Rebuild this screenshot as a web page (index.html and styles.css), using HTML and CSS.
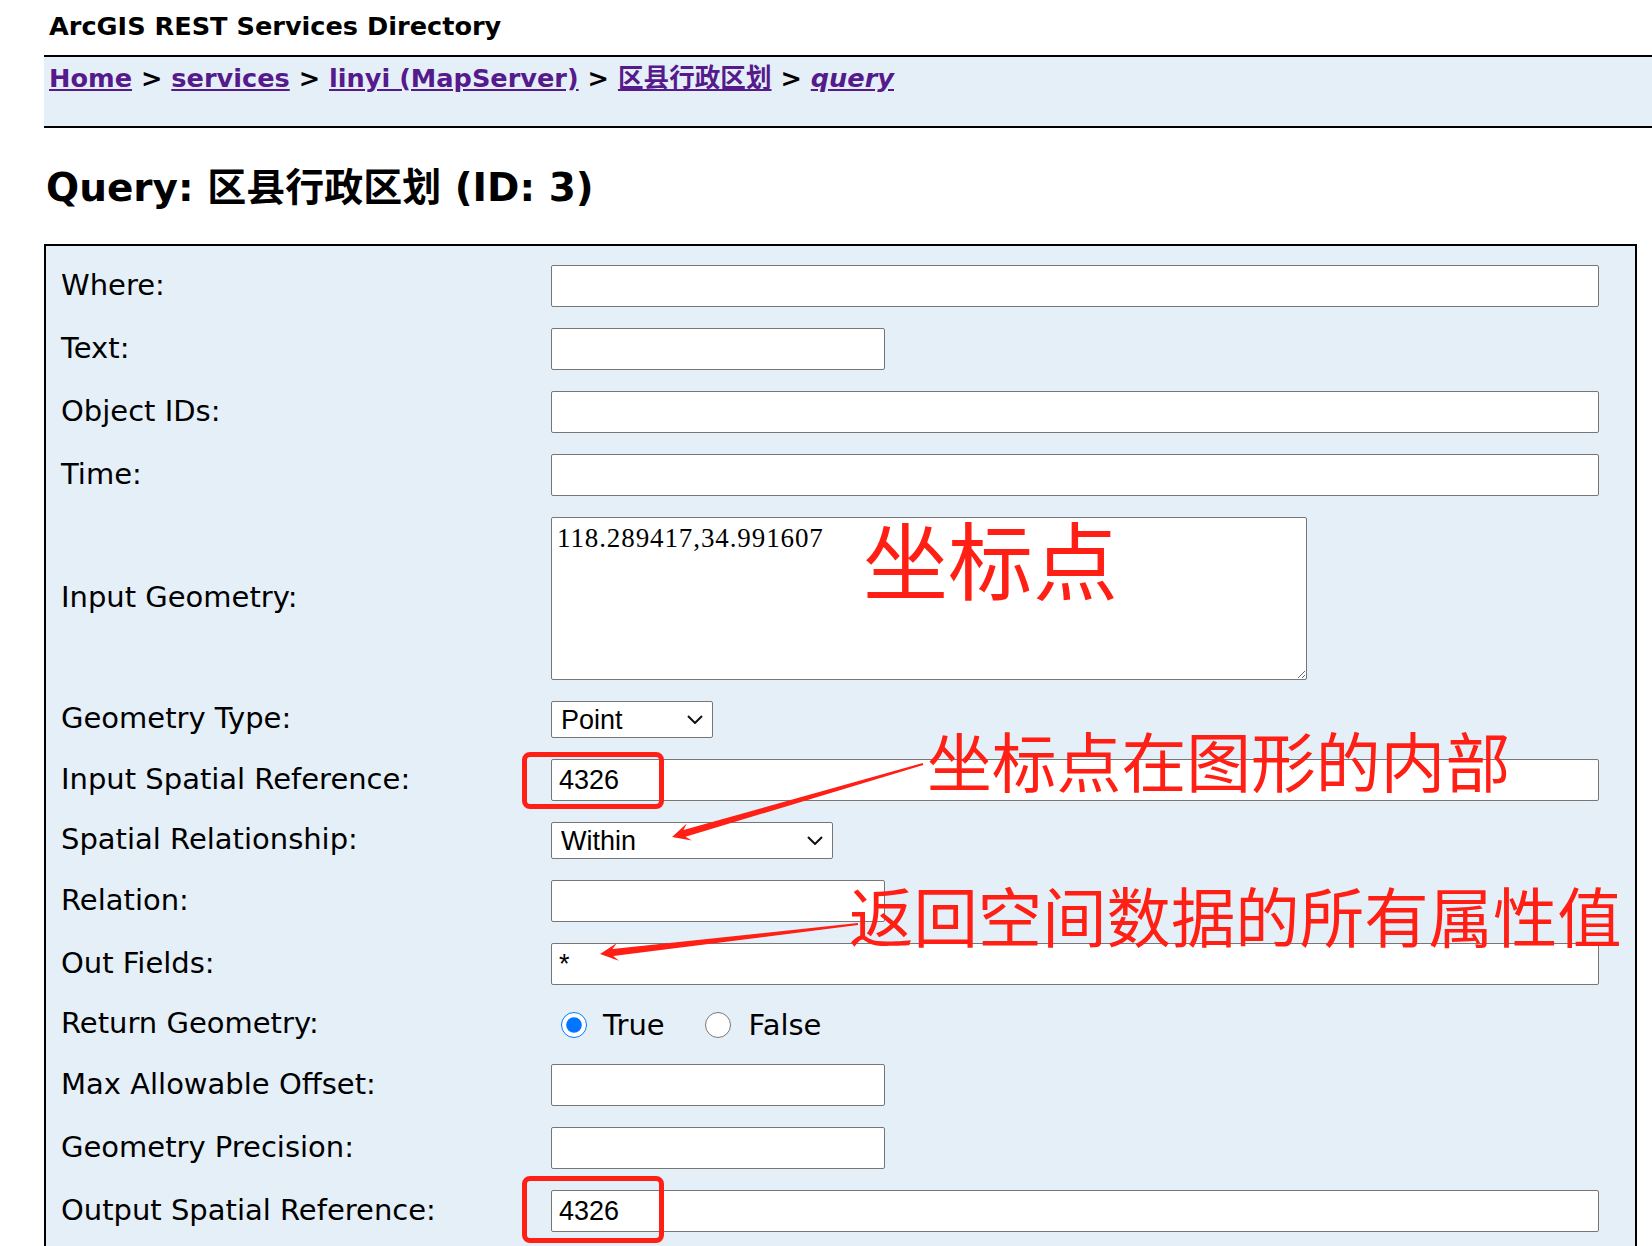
FILE: index.html
```html
<!DOCTYPE html>
<html lang="zh">
<head>
<meta charset="utf-8">
<title>ArcGIS REST Services Directory</title>
<link rel="stylesheet" href="styles.css">
</head>
<body>
<div class="page">
  <header class="top">
    <div class="title">ArcGIS REST Services Directory</div>
    <nav class="crumbs"><a href="#">Home</a> &gt; <a href="#">services</a> &gt; <a href="#">linyi (MapServer)</a> &gt; <a href="#">区县行政区划</a> &gt; <a href="#" class="cur">query</a></nav>
  </header>

  <h2 class="heading">Query: 区县行政区划 (ID: 3)</h2>

  <form class="box">
    <label class="lbl">Where:</label>
    <div class="fld"><input class="in full" type="text"></div>

    <label class="lbl">Text:</label>
    <div class="fld"><input class="in short" type="text"></div>

    <label class="lbl">Object IDs:</label>
    <div class="fld"><input class="in full" type="text"></div>

    <label class="lbl">Time:</label>
    <div class="fld"><input class="in full" type="text"></div>

    <label class="lbl">Input Geometry:</label>
    <div class="fld"><textarea class="geom">118.289417,34.991607</textarea></div>

    <label class="lbl">Geometry Type:</label>
    <div class="fld"><div class="sel sel-a"><select class="in dd"><option>Point</option></select><svg class="chev" width="16" height="9" viewBox="0 0 16 9"><polyline points="1,1 8,8 15,1" fill="none" stroke="#111" stroke-width="2"/></svg></div></div>

    <label class="lbl">Input Spatial Reference:</label>
    <div class="fld"><input class="in full" type="text" value="4326"></div>

    <label class="lbl">Spatial Relationship:</label>
    <div class="fld"><div class="sel sel-b"><select class="in dd"><option>Within</option></select><svg class="chev" width="16" height="9" viewBox="0 0 16 9"><polyline points="1,1 8,8 15,1" fill="none" stroke="#111" stroke-width="2"/></svg></div></div>

    <label class="lbl">Relation:</label>
    <div class="fld"><input class="in short" type="text"></div>

    <label class="lbl">Out Fields:</label>
    <div class="fld"><input class="in full star" type="text" value="*"></div>

    <label class="lbl">Return Geometry:</label>
    <div class="fld radios">
      <input type="radio" name="rg" id="rgt" checked><label for="rgt" class="rl">True</label>
      <input type="radio" name="rg" id="rgf" class="r2"><label for="rgf" class="rl rl2">False</label>
    </div>

    <label class="lbl">Max Allowable Offset:</label>
    <div class="fld"><input class="in short" type="text"></div>

    <label class="lbl">Geometry Precision:</label>
    <div class="fld"><input class="in short" type="text"></div>

    <label class="lbl">Output Spatial Reference:</label>
    <div class="fld"><input class="in full" type="text" value="4326"></div>
  </form>

  <div class="note n1">坐标点</div>
  <div class="note n2">坐标点在图形的内部</div>
  <div class="note n3">返回空间数据的所有属性值</div>
  <div class="mark m1"></div>
  <div class="mark m2"></div>
  <svg class="arrows" width="1652" height="1246" viewBox="0 0 1652 1246">
    <polygon points="923.3,765.0 685.5,836.8 691.8,840.6 672,837 686.8,823.4 683.5,830.0 922.7,763.0" fill="#ff1f14"/>
    <polygon points="858.1,925.0 613.3,956.0 618.9,960.8 600,954 616.9,943.0 612.5,949.0 857.9,923.0" fill="#ff1f14"/>
  </svg>
</div>
</body>
</html>
```

FILE: styles.css
```css
html, body {
  margin: 0;
  padding: 0;
  background: #fff;
  overflow: hidden;
}

body {
  font-family: "DejaVu Sans", "Noto Sans CJK SC", sans-serif;
  color: #000;
}

.page {
  position: relative;
  padding-left: 44px;
}

.title {
  font-weight: bold;
  font-size: 25.6px;
  line-height: 30px;
  padding: 11px 0 14px 5px;
  border-bottom: 2px solid #000;
}

.crumbs {
  background: #e5eff7;
  font-weight: bold;
  font-size: 25.6px;
  line-height: 30px;
  padding: 6px 0 33px 5px;
  border-bottom: 2px solid #000;
}

.crumbs a {
  color: #551a8b;
  text-decoration: underline;
}

.crumbs a.cur {
  font-style: italic;
}

.heading {
  margin: 37px 0 33px 2px;
  font-size: 39px;
  line-height: 46px;
  font-weight: bold;
}

.box {
  margin: 0 15px 0 0;
  background: #e5eff7;
  border: 2px solid #000;
  padding: 19px 36px 40px 15px;
  display: grid;
  grid-template-columns: 490px 1fr;
  row-gap: 21px;
  align-items: center;
}

.lbl {
  font-size: 29px;
  line-height: 33px;
  position: relative;
  top: -1px;
}

.fld {
  display: flex;
  align-items: center;
}

.in {
  box-sizing: border-box;
  height: 42px;
  margin: 0;
  padding: 0 7px;
  border: 1px solid #767676;
  border-radius: 2px;
  background: #fff;
  color: #000;
  font-family: "Liberation Sans", Arial, sans-serif;
  font-size: 27px;
  outline: none;
}

.full {
  width: 100%;
}

.short {
  width: 334px;
}

.geom {
  box-sizing: border-box;
  width: 756px;
  height: 163px;
  margin: 0;
  padding: 5px 5px;
  border: 1px solid #767676;
  border-radius: 2px;
  background: #fff;
  font-family: "Liberation Serif", "Times New Roman", serif;
  font-size: 27px;
  line-height: 31px;
  letter-spacing: 0.9px;
  color: #000;
  outline: none;
}

.sel {
  position: relative;
}

.dd {
  -webkit-appearance: none;
  appearance: none;
  height: 37px;
  padding: 0 9px;
}

.sel-a .dd {
  width: 162px;
}

.sel-b .dd {
  width: 282px;
}

.chev {
  position: absolute;
  right: 10px;
  top: 14px;
}

.radios {
  height: 37px;
  font-size: 29px;
}

.radios input {
  width: 26px;
  height: 26px;
  margin: 0 0 0 10px;
  accent-color: #0075ff;
}

.radios .r2 {
  margin-left: 40px;
}

.rl {
  margin-left: 16px;
  line-height: 33px;
  position: relative;
  top: 1px;
}

.rl2 {
  margin-left: 18px;
}

.note {
  position: absolute;
  color: #ff1f14;
  font-family: "Noto Sans CJK SC", sans-serif;
  font-weight: 400;
  line-height: 1;
  white-space: nowrap;
}

.n1 {
  left: 863px;
  top: 514px;
  font-size: 85px;
}

.n2 {
  left: 927px;
  top: 727px;
  font-size: 64.8px;
}

.n3 {
  left: 849px;
  top: 882px;
  font-size: 64.4px;
}

.mark {
  position: absolute;
  box-sizing: border-box;
  left: 522px;
  width: 142px;
  border: 5px solid #ff1f14;
  border-radius: 8px;
}

.m1 {
  top: 752px;
  height: 57px;
}

.m2 {
  top: 1176px;
  height: 67px;
}

.arrows {
  position: absolute;
  left: 0;
  top: 0;
  pointer-events: none;
}
```
